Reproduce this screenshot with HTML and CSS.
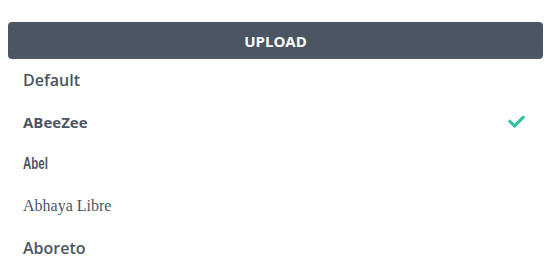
FILE: index.html
```html
<!DOCTYPE html>
<html>
<head>
<meta charset="utf-8">
<link rel="stylesheet" href="styles.css">
</head>
<body>
<div class="panel">
  <button class="upload">UPLOAD</button>
  <ul class="fonts">
    <li class="item f-default">Default</li>
    <li class="item f-abeezee selected">ABeeZee
      <svg class="check" width="17" height="13" viewBox="0 0 17 13"><path d="M2 6.5 L6.5 11 L15 2.5" fill="none" stroke="#36c2a5" stroke-width="3.2" stroke-linecap="square"/></svg>
    </li>
    <li class="item f-abel"><span class="narrow">Abel</span></li>
    <li class="item f-abhaya">Abhaya Libre</li>
    <li class="item f-aboreto">Aboreto</li>
  </ul>
</div>
</body>
</html>
```
FILE: styles.css
```css
html, body { margin: 0; padding: 0; background: #fff; }
.panel { padding: 22px 14px 0 8px; }
.upload {
  display: block; width: 100%; height: 37px; border: 0; border-radius: 4px;
  background: #4b5563; color: #fff;
  font-family: "Open Sans", sans-serif; font-weight: 700; font-size: 15px;
  letter-spacing: 0; padding: 0; margin: 0;
}
.fonts { list-style: none; margin: 0; padding: 0; }
.item {
  height: 42px; display: flex; align-items: center; justify-content: space-between;
  padding: 0 18px 0 15px; color: #4b5563;
  font-family: "Open Sans", sans-serif; font-size: 16px; font-weight: 600;
}
.f-abeezee { font-weight: 700; font-size: 15px; }
.f-abel { font-family: "Liberation Sans", sans-serif; font-weight: 700; font-size: 16px; }
.narrow { display: inline-block; transform: scaleX(0.72); transform-origin: left center; }
.f-abhaya { font-family: "Liberation Serif", serif; font-weight: 400; font-size: 16px; }
.check { display: block; margin-top: -2px; }
```
